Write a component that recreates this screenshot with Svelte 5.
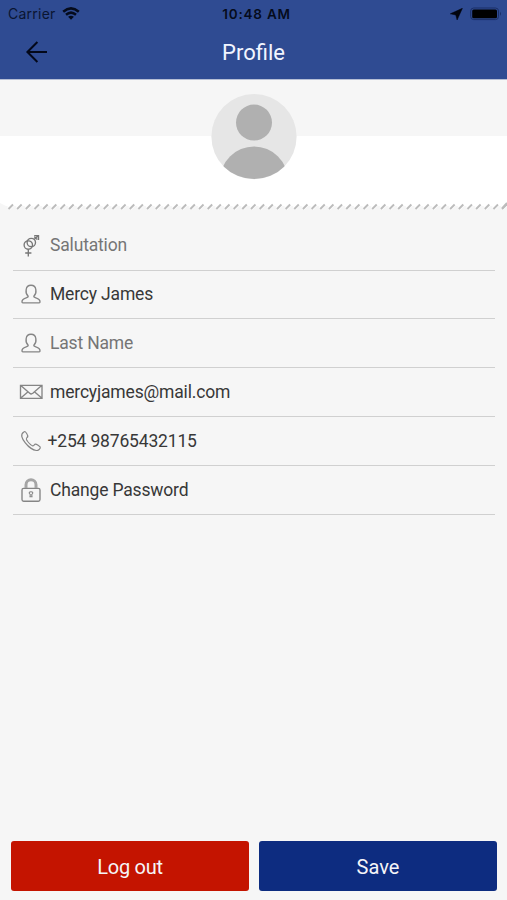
<script>
  const fields = [
    { icon: 'gender', text: 'Salutation', muted: true },
    { icon: 'person', text: 'Mercy James' },
    { icon: 'person', text: 'Last Name', muted: true },
    { icon: 'mail', text: 'mercyjames@mail.com' },
    { icon: 'phone', text: '+254 98765432115' },
    { icon: 'lock', text: 'Change Password' }
  ];
  const stitches = Array.from({ length: 58 }, (_, i) => 8.5 + i * 8.66);
</script>

<main>
  <header>
    <div class="status">
      <div class="left">
        <span class="carrier">Carrier</span>
        <svg width="18" height="13" viewBox="0 0 18 13">
          <g fill="none" stroke="#050b1c" stroke-width="2.5">
            <path d="M1.2 4.7Q9 -2 16.8 4.7" />
            <path d="M4 7.8Q9 3.5 14 7.8" />
          </g>
          <path d="M6.1 9.8Q9 7.5 11.9 9.8L9 12.7Z" fill="#050b1c" />
        </svg>
      </div>
      <span class="time">10:48 AM</span>
      <div class="right">
        <svg width="13" height="12" viewBox="0 0 13 12"><path d="M12.4 .3L.3 5.8L5.8 7L7.1 12Z" fill="#02050e" stroke="#02050e" stroke-width=".5" /></svg>
        <svg width="33" height="14" viewBox="0 0 33 14">
          <rect x=".7" y="1" width="27.8" height="11.6" rx="3" fill="none" stroke="#1b2f67" />
          <rect x="2.2" y="2.4" width="24.8" height="8.8" rx="1.5" fill="#000" />
          <path d="M30 4.8Q32 6.8 30 8.8Z" fill="#1b2f67" />
        </svg>
      </div>
    </div>
    <div class="nav">
      <svg width="24" height="24" viewBox="0 0 24 24" fill="none" stroke="#03081a" stroke-width="2"><path d="M22 12H2.5M12.4 2L2.4 12L12.4 22" /></svg>
      <h1>Profile</h1>
      <i></i>
    </div>
  </header>

  <section class="hero">
    <svg class="avatar" width="86" height="86" viewBox="0 0 86 86">
      <defs><clipPath id="disc"><circle cx="43" cy="42.6" r="42.5" /></clipPath></defs>
      <circle cx="43" cy="42.6" r="42.6" fill="#e6e6e6" />
      <g fill="#b0b0b0" clip-path="url(#disc)">
        <circle cx="43" cy="28.6" r="18" />
        <circle cx="43" cy="86.5" r="34" />
      </g>
    </svg>
  </section>
  <svg class="seam" width="507" height="8" viewBox="0 0 507 8">
    <path d="M0 0H507V1L502 4H6L0 1Z" fill="#fff" />
    {#each stitches as x}
      <path d="M{x} 6.5L{x + 3.8} 2.5" stroke="#fff" stroke-width="4" />
      <path d="M{x} 7L{x + 4.5} 2.5" stroke="#bcbcbc" stroke-width="1.9" />
    {/each}
    <path d="M502 6.5L507 1" stroke="#bcbcbc" stroke-width="1.9" />
  </svg>

  <ul>
    {#each fields as f}
      <li class:muted={f.muted} class:phone={f.icon === 'phone'}>
        <svg width="24" height="26" viewBox="0 0 24 26" fill="none" stroke="#858585" stroke-width="1.35">
          {#if f.icon === 'gender'}
            <g stroke="#777">
              <circle cx="9.3" cy="12" r="4.2" />
              <circle cx="12.3" cy="9.5" r="4.2" />
              <path d="M15.3 6.3L19.5 2.6M15.2 2.6H19.5V7M15.3 3.8L18.3 6.6M9.3 16.2V23.4M6.2 20H12.4" />
            </g>
          {:else if f.icon === 'person'}
            <path d="M9.2 15.2C6.3 12.5 7 9.8 7.2 8.5C7.5 5.7 9.2 4.2 12 4.2S16.5 5.7 16.8 8.5C17 9.8 17.7 12.5 14.8 15.2C14.7 16.2 15.5 16.3 17 16.9C20.3 18 21.2 18.8 21 21Q21 21.8 20.2 21.8H3.8Q3 21.8 3 21C2.8 18.8 3.7 18 7 16.9C8.5 16.3 9.3 16.2 9.2 15.2Z" />
          {:else if f.icon === 'mail'}
            <path d="M1.5 6.3H23V19.3H1.5ZM1.8 6.6L10.7 14.3Q12.2 15.6 13.8 14.3L22.7 6.6M1.8 19L9.1 12.8M22.7 19L15.4 12.8" />
          {:else if f.icon === 'phone'}
            <path stroke-width="1.2" d="M4.8 3.9C6 3 6.8 4 8.1 6.2C9.3 8.1 9.2 8.7 8 9.6C6.8 10.6 7 11.2 8.7 13.5C10.6 15.9 12.4 17.5 13.7 17.8C14.7 18.1 15.3 16.3 16.4 16.2C17.5 16.1 20.8 18.2 21.2 19.1C21.9 20.7 19 22.6 17.4 22.5C14.8 22.3 9.8 19.4 6.3 14.9C2.7 10.2 1.1 6.4 4.8 3.9Z" />
          {:else}
            <rect x="3" y="11.4" width="18" height="12.8" rx="1.6" />
            <path d="M7 11V7.8C7 1.2 17 1.2 17 7.8V11" stroke="#a5a5a5" stroke-width="3" />
            <path stroke-width="1.1" d="M11.3 17.6C9.3 16 10.3 14.7 12 14.7S14.7 16 12.7 17.6L13 19.8H11Z" />
          {/if}
        </svg>
        <span>{f.text}</span>
      </li>
    {/each}
  </ul>

  <footer>
    <button class="logout">Log out</button>
    <button class="save">Save</button>
  </footer>
</main>

<style>
  :global(body) { margin: 0; }
  main {
    width: 507px;
    height: 900px;
    display: flex;
    flex-direction: column;
    overflow: hidden;
    background: #f6f6f6;
    font-family: Roboto, sans-serif;
  }
  svg { display: block; flex: none; }
  header { height: 79px; background: #2f4b92; flex: none; }
  .status, .nav { display: grid; align-items: center; }
  .status {
    grid-template-columns: 1fr auto 1fr;
    height: 27px;
    padding: 0 4px 0 8px;
    font-family: Inter, sans-serif;
    font-size: 13.5px;
    color: #0a1531;
  }
  .left, .right { display: flex; align-items: center; }
  .left { gap: 6px; }
  .carrier { font-size: 14px; letter-spacing: .25px; }
  .right { justify-content: flex-end; gap: 7px; }
  .time { font-weight: 600; letter-spacing: .8px; color: #050b1c; transform: translateX(1px); }
  .nav { grid-template-columns: 24px 1fr 24px; height: 50px; padding: 0 25px; }
  h1 { margin: 0; font-size: 22px; font-weight: 400; text-align: center; color: #f2f5ff; }
  .hero {
    display: flex;
    justify-content: center;
    box-sizing: border-box;
    height: 123px;
    padding-top: 15px;
    background: linear-gradient(#f6f6f6 56.5px, #fff 56.5px);
    flex: none;
    box-shadow: inset 0 1px 0 #b5bed5;
  }
  .seam { flex: none; }
  ul { list-style: none; margin: 11.7px 12px 0 13px; padding: 0; }
  li {
    display: flex;
    align-items: center;
    gap: 7px;
    box-sizing: border-box;
    height: 48.85px;
    padding: 0 6px;
    border-bottom: 1.5px solid #d0d0d0;
    color: #383838;
    font-size: 17.5px;
    letter-spacing: -.17px;
    white-space: nowrap;
  }
  li span { padding-bottom: .6px; }
  li.muted { color: #757575; }
  li.phone { gap: 4.5px; }
  footer { display: flex; gap: 10px; margin-top: auto; padding: 0 10px 9px 11px; }
  button {
    flex: 1;
    height: 50px;
    border: 0;
    padding: 2px 0 0;
    border-radius: 3px;
    font: 400 20px Roboto, sans-serif;
    color: #f5f5f8;
  }
  .logout { background: #c41400; letter-spacing: -.25px; }
  .save { background: #0d2c80; }
</style>
